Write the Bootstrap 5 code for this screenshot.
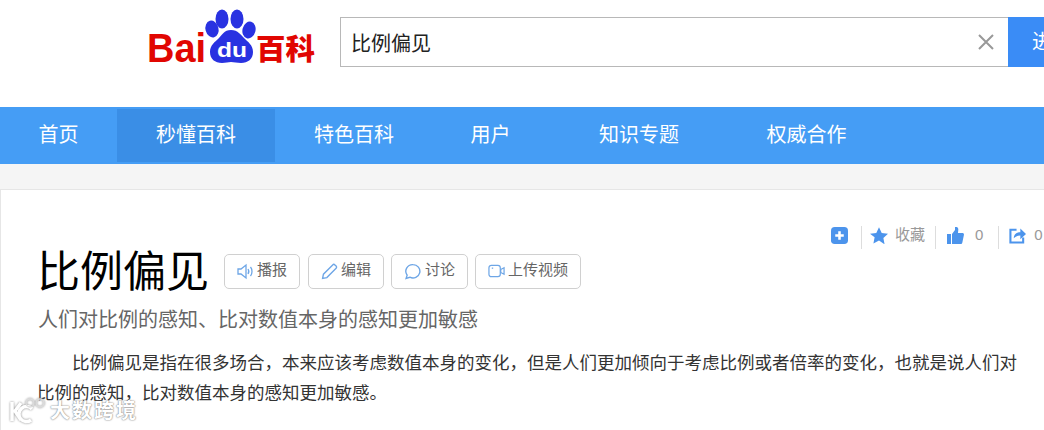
<!DOCTYPE html>
<html lang="zh-CN">
<head>
  <meta charset="UTF-8">
  <title>比例偏见_百度百科</title>
  <link href="https://cdn.jsdelivr.net/npm/bootstrap@5.3.0/dist/css/bootstrap.min.css" rel="stylesheet">
  <style>
    html, body { height: 430px; overflow: hidden; }
    body { font-family: "Liberation Sans", "Noto Sans CJK SC", sans-serif; background: #fff; color: #333; position: relative; }
    .top-head { height: 107px; padding-top: 17px; }
    .logo-box { width: 170px; margin-left: 146px; margin-right: 24px; margin-top: -9px; flex: none; }
    .search-box { width: 668px; height: 50px; border: 1px solid #b8b8b8; border-right: 0; font-size: 20px; color: #222; padding-left: 10px; flex: none; }
    .search-box span { position: relative; top: 2px; }
    .search-box svg { margin-right: 13px; }
    .search-btn { width: 36px; height: 50px; background: #3a8cf6; color: #fff; font-size: 20px; padding-left: 24px; overflow: hidden; flex: none; white-space: nowrap; }
    .blue-nav { height: 57px; background: #459df5; }
    .blue-nav a { color: #fff; font-size: 20px; text-decoration: none; height: 53px; line-height: 53px; text-align: center; margin-top: 2px; }
    .blue-nav a.on { background: #3a8ee6; }
    .grey-gap { height: 25px; background: #f5f5f5; }
    .main-box { border: 1px solid #e6e6e6; border-right: 0; border-bottom: 0; height: 241px; padding: 0 0 0 37px; background: #fff; }
    .side-tools { font-size: 15px; color: #999; padding-top: 33px; height: 57px; margin-left: 793px; white-space: nowrap; }
    .side-tools .sep { width: 1px; height: 23px; background: #ddd; margin-top: 4px; flex: none; }
    .side-tools svg { flex: none; }
    .gap-7 { margin-left: 7px; }
    .gap-8 { margin-left: 8px; }
    .gap-10 { margin-left: 10px; }
    .gap-11 { margin-left: 11px; }
    .gap-13 { margin-left: 13px; }
    .gap-15 { margin-left: 15px; }
    .title-line { height: 50px; }
    .title-line h1 { font-size: 43px; font-weight: 400; color: #000; margin: 0 15px 0 -1px; line-height: 50px; }
    .tool-btn { height: 35px; border: 1px solid #d0d0d0; border-radius: 5px; font-size: 15px; color: #666; background: #fff; padding: 0 12px 2px; white-space: nowrap; gap: 3px; margin-bottom: 2px; }
    .tool-btn svg { position: relative; top: 1px; }
    .btn-gap { margin-right: 7px; }
    .sub-title { font-size: 20px; color: #666; line-height: 28px; margin-top: 9px; }
    .sum-text { font-size: 17.5px; line-height: 30px; color: #333; width: 985px; text-indent: 35px; margin: 14px 0 0 -1px; }
    .mark-over { position: absolute; left: 8px; top: 396px; color: #fff; font-size: 20px; line-height: 20px; font-weight: 700; letter-spacing: 2px; text-shadow: 0 0 2px #888, 0 0 1px #888; gap: 4px; }
    .mark-over svg { filter: drop-shadow(0 0 1px #888); }
  </style>
</head>
<body>
  <div class="top-head d-flex align-items-start">
    <div class="logo-box">
      <svg width="170" height="66" viewBox="0 0 170 66">
        <ellipse cx="66" cy="21" rx="6.500" ry="8.500" fill="#2932e1" transform="rotate(-15 66 21)"/>
        <ellipse cx="76" cy="11" rx="6.500" ry="9.500" fill="#2932e1"/>
        <ellipse cx="91" cy="11" rx="6.500" ry="9.500" fill="#2932e1"/>
        <ellipse cx="103" cy="22" rx="6.500" ry="8.500" fill="#2932e1" transform="rotate(15 103 22)"/>
        <path d="M85 22c-7 0-9 5-12 8-4 4-9 7-9 14 0 7 5 11 12 11 4 0 6-1 9-1s6 1 10 1c7 0 12-4 12-11 0-7-5-10-9-14-3-3-6-8-13-8z" fill="#2932e1"/>
        <text x="1" y="54" font-family="Liberation Sans" font-weight="700" font-size="40" fill="#e10601" textLength="59" lengthAdjust="spacingAndGlyphs">Bai</text>
        <text x="71" y="49" font-family="Liberation Sans" font-weight="700" font-size="21" fill="#fff" textLength="30" lengthAdjust="spacingAndGlyphs">du</text>
        <text x="110" y="52" font-family="Noto Sans CJK SC" font-weight="900" font-size="29" fill="#e10601" textLength="59" lengthAdjust="spacingAndGlyphs">百科</text>
      </svg>
    </div>
    <div class="search-box d-flex align-items-center justify-content-between">
      <span>比例偏见</span>
      <svg width="18" height="18" viewBox="0 0 18 18"><path d="M2 2l14 14M16 2L2 16" stroke="#999" stroke-width="2" fill="none"/></svg>
    </div>
    <div class="search-btn d-flex align-items-center">进</div>
  </div>

  <div class="blue-nav d-flex align-items-start">
    <a href="#" style="width:117px">首页</a>
    <a href="#" class="on" style="width:158px">秒懂百科</a>
    <a href="#" style="width:158px">特色百科</a>
    <a href="#" style="width:115px">用户</a>
    <a href="#" style="width:182px">知识专题</a>
    <a href="#" style="width:153px">权威合作</a>
  </div>
  <div class="grey-gap"></div>

  <div class="main-box">
    <div class="side-tools d-flex align-items-center">
      <svg width="17" height="17" viewBox="1 1 16 16"><rect x="1" y="1" width="16" height="16" rx="3.500" fill="#4c94ec"/><path d="M9 5v8M5 9h8" stroke="#fff" stroke-width="2.400"/></svg>
      <span class="sep gap-13"></span>
      <svg class="gap-8" width="18" height="17" viewBox=".7 1 22.600 21"><path d="M12 1l3.400 7.300 7.900 1-5.800 5.400 1.500 7.900L12 17.800l-7 3.800 1.500-7.900L.7 9.300l7.900-1z" fill="#4c94ec"/></svg>
      <span class="gap-7">收藏</span>
      <span class="sep gap-10"></span>
      <svg class="gap-11" width="17" height="17" viewBox="1 1 17 17"><path d="M1 8h4v10H1zM6 8l3-4V1c2-.5 3.500 1 3.300 2.500L12 7h4.500c1 0 1.700 1 1.400 2l-1.600 7.700c-.2.800-.8 1.300-1.500 1.300H6z" fill="#4c94ec"/></svg>
      <span class="gap-11">0</span>
      <span class="sep gap-15"></span>
      <svg class="gap-10" width="17" height="17" viewBox="0 0 18 18"><path d="M8 3H1.500v13.500H15V11" fill="none" stroke="#4c94ec" stroke-width="2.200"/><path d="M5 12c0-4 3-6.500 7-6.500V1.500l6 6-6 5.500V9c-3 0-5 1-7 3z" fill="#4c94ec"/></svg>
      <span class="gap-8">0</span>
    </div>
    <div class="title-line d-flex align-items-center">
      <h1>比例偏见</h1>
      <span class="tool-btn d-inline-flex align-items-center me-2">
        <svg width="17" height="17" viewBox="0 0 17 16"><path d="M1 5.500h3L9 1.500v13l-5-4H1z" fill="none" stroke="#6ea6e6" stroke-width="1.300"/><path d="M11 5.500c1 1.500 1 3.500 0 5M13.500 3.500c2 2.500 2 6.500 0 9" fill="none" stroke="#6ea6e6" stroke-width="1.300"/></svg>播报
      </span>
      <span class="tool-btn d-inline-flex align-items-center btn-gap">
        <svg width="17" height="17" viewBox="0 0 16 16"><path d="M1.500 14.500l.8-4L11 1.800c.6-.6 1.500-.6 2.100 0l1.100 1.100c.6.600.6 1.500 0 2.100L5.500 13.700z" fill="none" stroke="#6ea6e6" stroke-width="1.300"/></svg>编辑
      </span>
      <span class="tool-btn d-inline-flex align-items-center btn-gap">
        <svg width="18" height="17" viewBox="0 0 16 16"><path d="M8 1.500a6.500 6.300 0 1 1-3 11.900L1.500 14.500l1-3A6.500 6.300 0 0 1 8 1.500z" fill="none" stroke="#6ea6e6" stroke-width="1.300"/></svg>讨论
      </span>
      <span class="tool-btn d-inline-flex align-items-center">
        <svg width="17" height="16" viewBox="0 0 18 16"><rect x="1" y="2" width="12" height="12" rx="2.500" fill="none" stroke="#6ea6e6" stroke-width="1.300"/><path d="M13.500 6.500l3.500-2v7l-3.500-2z" fill="none" stroke="#6ea6e6" stroke-width="1.300"/><path d="M4 5h1.500" stroke="#6ea6e6" stroke-width="1.300"/></svg>上传视频
      </span>
    </div>
    <div class="sub-title">人们对比例的感知、比对数值本身的感知更加敏感</div>
    <div class="sum-text">比例偏见是指在很多场合，本来应该考虑数值本身的变化，但是人们更加倾向于考虑比例或者倍率的变化，也就是说人们对比例的感知，比对数值本身的感知更加敏感。</div>
  </div>

  <div class="mark-over d-flex align-items-center">
    <svg width="38" height="30" viewBox="0 0 38 30"><path d="M4 6v19M13 7l-6 8 6 9M24 13a7.500 7.500 0 1 0-1 11" fill="none" stroke="#fff" stroke-width="3.500"/><circle cx="22" cy="7" r="4" fill="none" stroke="#ddd" stroke-width="1.500"/><circle cx="32" cy="7" r="4" fill="none" stroke="#ddd" stroke-width="1.500"/></svg>
    <span>大数跨境</span>
  </div>
</body>
</html>
